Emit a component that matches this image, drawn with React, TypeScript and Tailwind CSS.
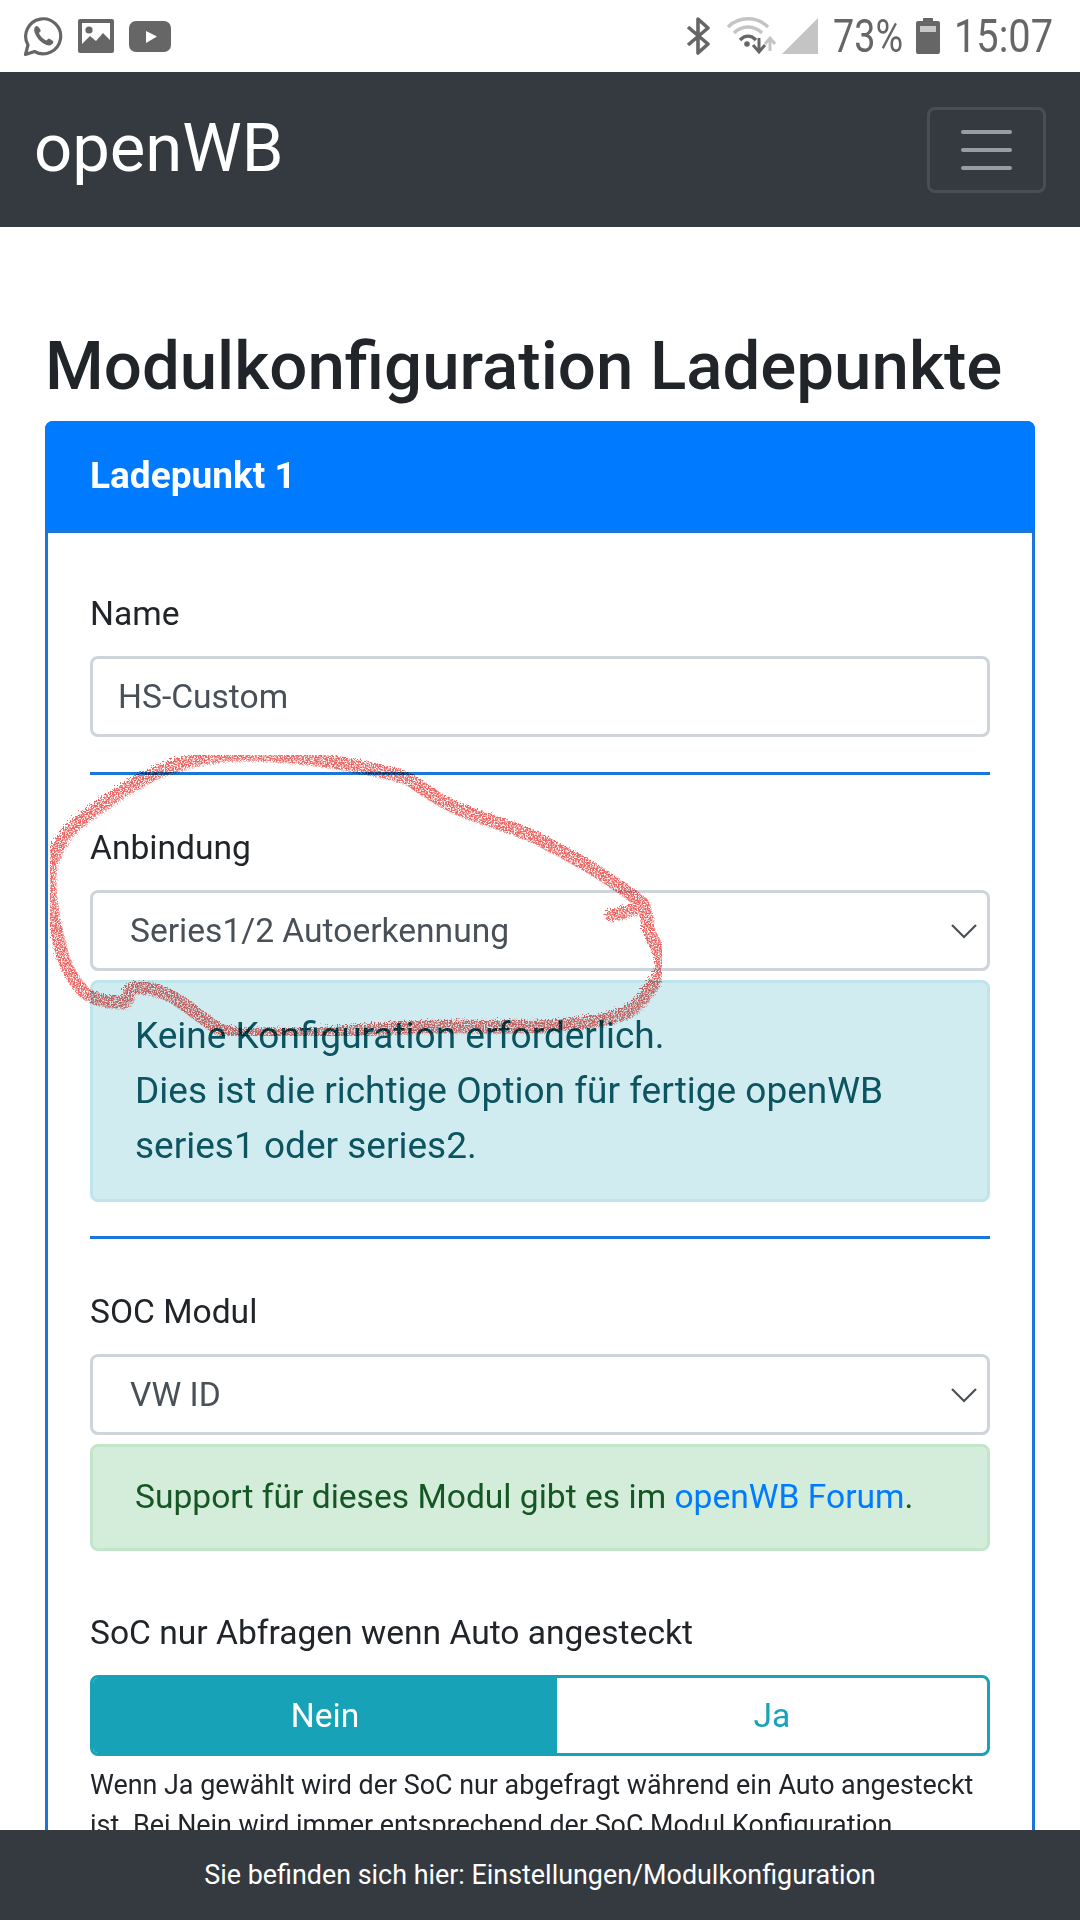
import React from "react";

const Chevron = () => (
  <svg width="26" height="16" viewBox="0 0 26 16" fill="none" className="shrink-0">
    <path d="M1 2 L13 14 L25 2" stroke="#495057" strokeWidth="2.2" />
  </svg>
);

const Select = ({ value }: { value: string }) => (
  <div className="flex h-[81px] items-center justify-between rounded-[8px] border-[3px] border-[#ced4da] bg-white pl-[37px] pr-[10px] text-[#495057]">
    <span>{value}</span>
    <Chevron />
  </div>
);

const Divider = () => <div className="h-[3px] bg-[#1a76d8]" />;

const StatusIcons = () => (
  <div className="flex items-center gap-[15px]">
    <svg width="40" height="40" viewBox="0 0 40 40" fill="none">
      <path
        d="M2.5 38.5 L5 29 A17.5 17.5 0 1 1 11.5 35.5 Z"
        stroke="#666"
        strokeWidth="3.2"
        strokeLinejoin="round"
      />
      <path
        d="M13.5 10 C11 11 10.5 14 12 17.5 C14.5 23 18 26.5 23.5 29 C27 30 29.5 29 30.5 26 C30.5 25 27 23 25.5 22.5 L23.5 24.5 C20.5 23.5 17 20 16 17 L17.8 15 C17.5 13.5 15.5 10 13.5 10 Z"
        fill="#666"
      />
    </svg>
    <svg width="36" height="34" viewBox="0 0 36 34">
      <rect width="36" height="34" rx="2" fill="#666" />
      <rect x="4" y="4" width="28" height="26" fill="#fff" />
      <circle cx="11" cy="11" r="3.6" fill="#666" />
      <path d="M4 25 L12 17 L18 22 L25 14 L32 21 L32 30 L4 30 Z" fill="#666" />
    </svg>
    <svg width="42" height="31" viewBox="0 0 42 31">
      <rect width="42" height="31" rx="7" fill="#666" />
      <path d="M17 10 L28 15.5 L17 22 Z" fill="#fff" />
    </svg>
  </div>
);

const StatusRight = () => (
  <div className="flex items-center">
    <svg width="24" height="38" viewBox="0 0 24 38" fill="none" className="mr-[17px]">
      <path
        d="M2 10 L22 27 L12 36 L12 2 L22 11 L2 28"
        stroke="#666"
        strokeWidth="3.6"
        strokeLinejoin="round"
      />
    </svg>
    <svg width="50" height="38" viewBox="0 0 50 38" fill="none" className="mr-[5px]">
      <path d="M1 10 C12 -1 30 -1 41 10" stroke="#c4c4c4" strokeWidth="3.4" />
      <path d="M7 16 C15 8 27 8 35 16" stroke="#c4c4c4" strokeWidth="3.4" />
      <path d="M13 23 C18 18 24 18 29 23" stroke="#666" strokeWidth="3.4" />
      <circle cx="20" cy="27" r="2.8" fill="#666" />
      <path d="M32 21 V34 M26 28 L32 35 L38 28" stroke="#666" strokeWidth="3" />
      <path d="M43 34 V21 M38 27 L43 21 L48 27" stroke="#c4c4c4" strokeWidth="3" />
    </svg>
    <svg width="36" height="36" viewBox="0 0 36 36" className="mr-[15px]">
      <path d="M0 36 L36 0 V36 Z" fill="#c4c4c4" />
    </svg>
    <span className="inline-block w-[71px] origin-left scale-x-[0.82] whitespace-nowrap text-[46px] leading-none text-[#666]">
      73%
    </span>
    <svg width="24" height="36" viewBox="0 0 24 36" className="ml-[12px] mr-[14px]">
      <path d="M7 0 H17 V3 H22 A2 2 0 0 1 24 5 V34 A2 2 0 0 1 22 36 H2 A2 2 0 0 1 0 34 V5 A2 2 0 0 1 2 3 H7 Z" fill="#666" />
      <rect x="4" y="8" width="16" height="6" fill="#c8c8c8" />
    </svg>
    <span className="inline-block w-[97px] origin-left scale-x-[0.865] whitespace-nowrap text-[46px] leading-none text-[#666]">
      15:07
    </span>
  </div>
);

// the red hand-drawn circle on top of the screenshot
const Scribble = () => (
  <svg
    className="pointer-events-none absolute left-0 top-0 mix-blend-multiply"
    width="1080"
    height="1920"
    viewBox="0 0 1080 1920"
    fill="none"
  >
    <defs>
      <filter id="chalk" x="0" y="0" width="100%" height="100%">
        <feTurbulence type="fractalNoise" baseFrequency="0.7" numOctaves="2" seed="4" result="noise" />
        <feDisplacementMap in="SourceGraphic" in2="noise" scale="11" result="rough" />
        <feColorMatrix
          in="noise"
          type="matrix"
          values="0 0 0 0 0  0 0 0 0 0  0 0 0 0 0  0 0 0 4 -1.3"
          result="grain"
        />
        <feComposite in="rough" in2="grain" operator="in" />
      </filter>
    </defs>
    <path
      d="M612 916 C622 914 634 910 644 908 C648 915 648 923 649 930 C652 940 660 950 662 960 C662 968 661 974 657 980 C648 992 640 1006 627 1013 C600 1024 570 1025 540 1027 C495 1028 450 1026 410 1028 C365 1030 320 1037 280 1035 C255 1034 232 1038 215 1027 C198 1016 182 1000 163 993 C152 989 140 986 131 990 C128 994 128 1001 124 1003 C110 1003 95 1001 85 993 C75 983 68 970 63 957 C57 932 50 905 50 880 C50 862 58 846 68 833 C82 818 100 808 115 797 C132 785 152 774 172 767 C196 759 220 755 245 755 C285 755 322 760 358 767 C378 771 396 774 410 780 C424 790 438 800 454 807 C482 820 512 826 540 840 C562 852 586 864 605 877 C618 886 634 896 644 905"
      stroke="#e8403c"
      strokeOpacity="0.8"
      strokeWidth="13"
      strokeLinecap="round"
      strokeLinejoin="round"
      filter="url(#chalk)"
    />
  </svg>
);

export default function App() {
  return (
    <div className="relative h-[1920px] w-[1080px] overflow-hidden bg-white font-['Roboto',sans-serif] text-[33.6px] leading-[45px] text-[#212529]">
      <div className="flex h-[72px] items-center justify-between pl-[23px] pr-[29px]">
        <StatusIcons />
        <StatusRight />
      </div>

      <div className="flex h-[155px] items-center justify-between bg-[#343a40] px-[34px]">
        <span className="pb-[2px] text-[67px] leading-none text-white">openWB</span>
        <div className="flex h-[86px] w-[119px] flex-col items-center justify-center gap-[14px] rounded-[8px] border-[3px] border-white/10">
          <div className="h-[4px] w-[51px] rounded-full bg-white/50" />
          <div className="h-[4px] w-[51px] rounded-full bg-white/50" />
          <div className="h-[4px] w-[51px] rounded-full bg-white/50" />
        </div>
      </div>

      <div className="px-[45px] pt-[100px]">
        <h1 className="whitespace-nowrap text-[67.2px] font-medium leading-[78px]">Modulkonfiguration Ladepunkte</h1>
        <div className="mt-[16px] rounded-[8px] border-[3px] border-[#1a76d8]">
          <div className="mx-[-3px] mt-[-3px] flex h-[112px] items-center rounded-t-[8px] border-b-[3px] border-[#1a76d8] bg-[#007bff] px-[45px] text-[37px] font-bold text-white">
            Ladepunkt 1
          </div>
          <div className="px-[42px] pt-[58px]">
            <div>Name</div>
            <div className="mt-[20px] flex h-[81px] items-center rounded-[8px] border-[3px] border-[#ced4da] px-[25px] text-[#495057]">
              HS-Custom
            </div>
            <div className="mt-[35px]">
              <Divider />
            </div>

            <div className="mt-[50px]">Anbindung</div>
            <div className="mt-[20px]">
              <Select value="Series1/2 Autoerkennung" />
            </div>
            <div className="mt-[9px] rounded-[8px] border-[3px] border-[#bee5eb] bg-[#d1ecf1] px-[42px] pb-[26px] pt-[25px] text-[37px] leading-[55px] text-[#0c5460]">
              Keine Konfiguration erforderlich.
              <br />
              Dies ist die richtige Option für fertige openWB series1 oder series2.
            </div>
            <div className="mt-[34px]">
              <Divider />
            </div>

            <div className="mt-[50px]">SOC Modul</div>
            <div className="mt-[20px]">
              <Select value="VW ID" />
            </div>
            <div className="mt-[9px] rounded-[8px] border-[3px] border-[#c3e6cb] bg-[#d4edda] px-[42px] pb-[26px] pt-[25px] leading-[50px] text-[#155724]">
              Support für dieses Modul gibt es im <span className="text-[#007bff]">openWB Forum</span>.
            </div>

            <div className="mt-[59px]">SoC nur Abfragen wenn Auto angesteckt</div>
            <div className="mt-[20px] flex h-[81px] overflow-hidden rounded-[8px] border-[3px] border-[#17a2b8]">
              <div className="flex w-[464px] items-center justify-center bg-[#17a2b8] text-white">Nein</div>
              <div className="flex flex-1 items-center justify-center text-[#17a2b8]">Ja</div>
            </div>
            <p className="mt-[9px] text-[26.88px] leading-[40px]">
              Wenn Ja gewählt wird der SoC nur abgefragt während ein Auto angesteckt ist. Bei Nein wird immer entsprechend der SoC Modul Konfiguration
            </p>
          </div>
        </div>
      </div>

      <Scribble />

      <div className="absolute bottom-0 left-0 flex h-[90px] w-full items-center justify-center bg-[#343a40] text-[26.88px] text-white">
        Sie befinden sich hier: Einstellungen/Modulkonfiguration
      </div>
    </div>
  );
}
